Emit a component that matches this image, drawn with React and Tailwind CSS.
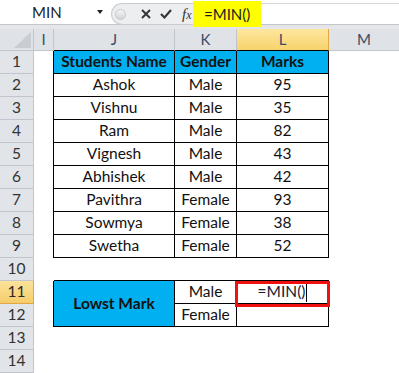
import React from 'react';

const font = { fontFamily: "Lato, 'Liberation Sans', sans-serif" };

const rows = [
  ['Ashok', 'Male', 95],
  ['Vishnu', 'Male', 35],
  ['Ram', 'Male', 82],
  ['Vignesh', 'Male', 43],
  ['Abhishek', 'Male', 42],
  ['Pavithra', 'Female', 93],
  ['Sowmya', 'Female', 38],
  ['Swetha', 'Female', 52],
];

const RowHead = ({ n, active }) => (
  <div
    className={`flex items-center justify-center border-r border-b text-[15.5px] ${
      active
        ? 'bg-gradient-to-b from-[#fbe39b] to-[#f6cc6a] border-[#e2a847] text-[#2a2a2a]'
        : 'bg-[#e1e4e8] border-[#c2c6cc] text-[#333]'
    }`}
  >
    {n}
  </div>
);

const Cell = ({ children, className = '' }) => (
  <div className={`flex items-center justify-center text-[15.5px] text-[#111] ${className}`}>{children}</div>
);

export default function App() {
  return (
    <div className="w-[399px] h-[373px] overflow-hidden bg-white select-none" style={font}>
      {/* formula bar */}
      <div className="relative z-10 flex h-[25px] border-b border-[#c3c6cb] bg-white">
        <div className="flex w-[111px] items-center">
          <span className="pl-[32px] text-[15px] text-[#1c1c1c]">MIN</span>
          <span className="ml-auto mr-[8px] h-0 w-0 border-x-[3px] border-t-[4px] border-x-transparent border-t-[#222]" />
        </div>
        <div className="mt-[3px] flex h-[22px] w-[82px] items-center rounded-l-full border border-r-0 border-[#c9ccd0] bg-[#eceef0]">
          <span className="ml-[3px] h-[11px] w-[11px] rounded-full border border-[#c4c7cb] bg-gradient-to-b from-[#f4f5f6] to-[#d3d6d9]" />
          <svg className="ml-[15px]" width="10" height="10" viewBox="0 0 10 10">
            <path d="M1 1 L9 9 M9 1 L1 9" stroke="#333" strokeWidth="1.9" />
          </svg>
          <svg className="ml-[9px]" width="12" height="10" viewBox="0 0 12 10">
            <path d="M1 5 L4.5 8.5 L11 1" stroke="#333" strokeWidth="2.1" fill="none" />
          </svg>
          <span
            className="ml-[10px] text-[15px] italic text-[#333]"
            style={{ fontFamily: "'Liberation Serif', serif" }}
          >
            f<span className="text-[12px]">x</span>
          </span>
        </div>
        <div className="mt-[3px] flex flex-1 items-start border-t border-[#d4d7db]">
          <div className="-mt-[3px] flex h-[26px] w-[68px] items-center bg-[#ffff00] pl-[11px] text-[15px] text-[#1c1c1c]">
            =MIN()
          </div>
        </div>
      </div>
      <div className="h-[4px] bg-[#e4e6e9]" />

      {/* sheet */}
      <div className="grid grid-cols-[34px_20px_121px_62px_92px_70px] grid-rows-[22px] auto-rows-[23px]">
        {/* column headers */}
        <div className="relative border-r border-b border-[#c2c6cc] bg-[#dfe2e6]">
          <svg className="absolute bottom-[2px] right-[2px]" width="17" height="16" viewBox="0 0 17 16">
            <path d="M17 0 L17 16 L0 16 Z" fill="#c9cdd2" />
          </svg>
        </div>
        <div className="flex items-center justify-center border-r border-b border-[#c2c6cc] bg-[#dfe2e6] text-[15px] text-[#3b4d66]">I</div>
        <div className="flex items-center justify-center border-r border-b border-[#c2c6cc] border-b-black bg-[#dfe2e6] text-[15px] text-[#3b4d66]">J</div>
        <div className="flex items-center justify-center border-r border-b border-[#c2c6cc] border-b-black bg-[#dfe2e6] text-[15px] text-[#3b4d66]">K</div>
        <div className="flex items-center justify-center border-r border-b border-[#e2a847] border-b-black bg-gradient-to-b from-[#fde69d] to-[#f8d36c] text-[15px] text-[#3b4d66]">L</div>
        <div className="flex items-center justify-center border-b border-[#c2c6cc] bg-[#dfe2e6] text-[15px] text-[#3b4d66]">M</div>

        {/* row 1 */}
        <RowHead n={1} />
        <div className="border-r border-black" />
        <Cell className="border-r border-b border-black bg-[#00b0f0] font-bold">Students Name</Cell>
        <Cell className="border-r border-b border-black bg-[#00b0f0] font-bold">Gender</Cell>
        <Cell className="border-r border-b border-black bg-[#00b0f0] font-bold">Marks</Cell>
        <div />

        {rows.map(([name, gender, mark], i) => (
          <React.Fragment key={name}>
            <RowHead n={i + 2} />
            <div className="border-r border-black" />
            <Cell className="border-r border-b border-black">{name}</Cell>
            <Cell className="border-r border-b border-black">{gender}</Cell>
            <Cell className="border-r border-b border-black">{mark}</Cell>
            <div />
          </React.Fragment>
        ))}

        {/* row 10 */}
        <RowHead n={10} />
        <div />
        <div className="border-b border-black" />
        <div className="border-b border-black" />
        <div className="border-b border-black" />
        <div />

        {/* rows 11-12 */}
        <RowHead n={11} active />
        <div className="row-span-2 border-r border-black" />
        <Cell className="row-span-2 border-r border-b border-black bg-[#00b0f0] font-bold">Lowst Mark</Cell>
        <Cell className="border-r border-b border-black">Male</Cell>
        <Cell className="relative border-r border-b border-black">
          <span className="text-[#1a2236]">=MIN()</span>
          <span className="ml-px h-[19px] w-px bg-black" />
          <span className="absolute left-[-2px] top-0 h-[26px] w-[95px] border-[3px] border-[#f01010]" />
        </Cell>
        <div />

        <RowHead n={12} />
        <Cell className="border-r border-b border-black">Female</Cell>
        <div className="border-r border-b border-black" />
        <div />

        <RowHead n={13} />
        <div />
        <div />
        <div />
        <div />
        <div />

        <RowHead n={14} />
        <div />
        <div />
        <div />
        <div />
        <div />
      </div>
    </div>
  );
}
